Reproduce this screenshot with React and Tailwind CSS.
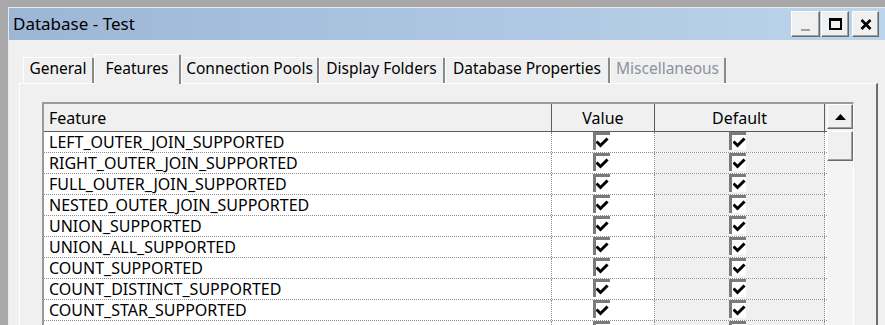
import React from 'react';

const font = { fontFamily: '"Noto Sans", "Open Sans", Arial, sans-serif' };

const tabs = [
  { label: 'General', w: 'w-[71px]' },
  { label: 'Features', w: 'w-[87px]', active: true },
  { label: 'Connection Pools', w: 'w-[138px]' },
  { label: 'Display Folders', w: 'w-[126px]' },
  { label: 'Database Properties', w: 'w-[165px]' },
  { label: 'Miscellaneous', w: 'w-[116px]', disabled: true },
];

// last row is only partly visible at the bottom edge
const features = [
  'LEFT_OUTER_JOIN_SUPPORTED',
  'RIGHT_OUTER_JOIN_SUPPORTED',
  'FULL_OUTER_JOIN_SUPPORTED',
  'NESTED_OUTER_JOIN_SUPPORTED',
  'UNION_SUPPORTED',
  'UNION_ALL_SUPPORTED',
  'COUNT_SUPPORTED',
  'COUNT_DISTINCT_SUPPORTED',
  'COUNT_STAR_SUPPORTED',
  '',
];

function CheckBox() {
  return (
    <div className="w-[17px] h-[18px] border-t-[3px] border-l-[3px] border-[#7a7a7a] bg-white flex items-center justify-center">
      <svg width="13" height="12" viewBox="0 0 13 12">
        <path d="M1.5 5.5 L4.5 8.5 L10.5 2.5" fill="none" stroke="#000" strokeWidth="3" strokeLinecap="square" />
      </svg>
    </div>
  );
}

function TitleButton({ children, w }) {
  return (
    <div className={`${w} h-[26px] bg-[#f0f0f0] border-t border-l border-white border-r border-b border-r-[#6a6a6a] border-b-[#6a6a6a] shadow-[inset_-1px_-1px_0_#a0a0a0] flex items-center justify-center`}>
      {children}
    </div>
  );
}

export default function App() {
  return (
    <div className="w-[885px] h-[325px] overflow-hidden bg-[#a8a8a8] pt-[7px] pl-[8px] flex text-black" style={font}>
      <div className="flex-1 flex flex-col border-t border-l border-[#e8e8e8] bg-[#f0f0f0] min-h-0">
        {/* Title bar */}
        <div className="shrink-0 h-[32px] flex items-center justify-between pl-[4px] pr-[7px] bg-gradient-to-r from-[#9db6d5] to-[#bcd4ec]">
          <span className="text-[17px]">Database - Test</span>
          <div className="flex items-center">
            <TitleButton w="w-[29px]">
              <div className="w-[9px] h-[2px] bg-[#a0a0a0] mt-[12px]" />
            </TitleButton>
            <div className="ml-[1px]">
              <TitleButton w="w-[28px]">
                <div className="w-[13px] h-[12px] border-2 border-t-[3px] border-black" />
              </TitleButton>
            </div>
            <div className="ml-[3px]">
              <TitleButton w="w-[27px]">
                <svg width="12" height="11" viewBox="0 0 12 11">
                  <path d="M1.5 1 L10.5 10 M10.5 1 L1.5 10" stroke="#000" strokeWidth="2.6" />
                </svg>
              </TitleButton>
            </div>
          </div>
        </div>

        {/* Body */}
        <div className="flex-1 min-h-0 flex flex-col pt-[12px] pl-[10px] pr-[8px]">
          {/* Tabs */}
          <div className="shrink-0 h-[31px] flex items-end pl-[4px] relative z-10">
            {tabs.map((t) =>
              t.active ? (
                <div
                  key={t.label}
                  className={`${t.w} h-[30px] -mb-px bg-[#f0f0f0] border-t border-l border-white border-r-2 border-r-[#8a8a8a] rounded-tr-[2px] flex items-center justify-center text-[15.5px] pb-[2px]`}
                >
                  {t.label}
                </div>
              ) : (
                <div
                  key={t.label}
                  className={`${t.w} h-[26px] bg-[#f0f0f0] border-t border-l border-white border-r-2 border-r-[#8a8a8a] rounded-tr-[2px] flex items-center justify-center text-[15.5px] pb-[4px] ${t.disabled ? 'text-[#8c93a0]' : ''}`}
                >
                  {t.label}
                </div>
              )
            )}
          </div>

          {/* Panel */}
          <div className="flex-1 min-h-0 overflow-hidden border-t border-l border-white border-r-2 border-r-[#6e6e6e] pt-[18px] pl-[22px] pr-[22px]">
            <div className="h-[260px] border-t-2 border-l-2 border-[#9a9a9a] border-r border-r-white flex bg-white">
              {/* Table */}
              <div className="w-[783px] flex flex-col">
                <div className="shrink-0 h-[28px] flex bg-[#f0f0f0] border-b border-[#5c5c5c] text-[16px]">
                  <div className="w-[508px] border-r border-[#5c5c5c] pl-[5px] flex items-center">Feature</div>
                  <div className="w-[103px] border-r border-[#5c5c5c] flex items-center justify-center">Value</div>
                  <div className="w-[170px] border-r border-[#5c5c5c] flex items-center justify-center">Default</div>
                </div>
                {features.map((f, i) => (
                  <div key={i} className="shrink-0 h-[21px] flex border-b border-dotted border-[#8f8f8f] text-[16px]">
                    <div className="w-[508px] border-r border-dotted border-[#8f8f8f] pl-[5px] flex items-center bg-white leading-none">
                      {f}
                    </div>
                    <div className="w-[103px] border-r border-dotted border-[#8f8f8f] flex justify-center pr-[4px] bg-white">
                      <CheckBox />
                    </div>
                    <div className="w-[170px] border-r border-dotted border-[#8f8f8f] flex justify-center pr-[4px] bg-[#f0f0f0]">
                      <CheckBox />
                    </div>
                  </div>
                ))}
              </div>

              {/* Scrollbar */}
              <div className="w-[26px] flex flex-col bg-[#f4f4f4]">
                <div className="shrink-0 h-[25px] bg-[#f0f0f0] border-t border-l border-white border-r border-b border-r-[#6a6a6a] border-b-[#6a6a6a] shadow-[inset_-1px_-1px_0_#a0a0a0] flex items-center justify-center">
                  <svg width="11" height="6" viewBox="0 0 11 6">
                    <path d="M0 6 L5.5 0 L11 6 Z" fill="#000" />
                  </svg>
                </div>
                <div className="shrink-0 h-[30px] mt-[2px] bg-[#f0f0f0] border-t border-l border-white border-r border-b border-r-[#6a6a6a] border-b-[#6a6a6a] shadow-[inset_-1px_-1px_0_#a0a0a0]" />
              </div>
            </div>
          </div>
        </div>
      </div>
    </div>
  );
}
